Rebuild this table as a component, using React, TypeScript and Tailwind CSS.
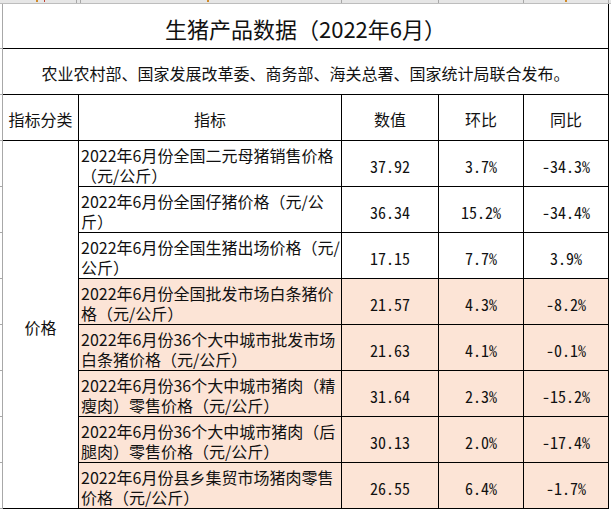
import React from "react";

const rows = [
  { l1: "2022年6月份全国二元母猪销售价格", l2: "（元/公斤）", v: "37.92", h: "3.7%", t: "-34.3%", pink: false },
  { l1: "2022年6月份全国仔猪价格（元/公", l2: "斤）", v: "36.34", h: "15.2%", t: "-34.4%", pink: false },
  { l1: "2022年6月份全国生猪出场价格（元/", l2: "公斤）", v: "17.15", h: "7.7%", t: "3.9%", pink: false },
  { l1: "2022年6月份全国批发市场白条猪价", l2: "格（元/公斤）", v: "21.57", h: "4.3%", t: "-8.2%", pink: true },
  { l1: "2022年6月份36个大中城市批发市场", l2: "白条猪价格（元/公斤）", v: "21.63", h: "4.1%", t: "-0.1%", pink: true },
  { l1: "2022年6月份36个大中城市猪肉（精", l2: "瘦肉）零售价格（元/公斤）", v: "31.64", h: "2.3%", t: "-15.2%", pink: true },
  { l1: "2022年6月份36个大中城市猪肉（后", l2: "腿肉）零售价格（元/公斤）", v: "30.13", h: "2.0%", t: "-17.4%", pink: true },
  { l1: "2022年6月份县乡集贸市场猪肉零售", l2: "价格（元/公斤）", v: "26.55", h: "6.4%", t: "-1.7%", pink: true },
];

const num = "font-['Noto_Sans_Mono_CJK_SC','Noto_Sans_CJK_SC',monospace]";

export default function App() {
  return (
    <div className="w-[611px] h-[512px] bg-white overflow-hidden text-[#111] font-['Noto_Sans_CJK_SC',sans-serif]">
      {/* top header strip */}
      <div className="relative flex h-[4px] bg-[#e6e6e6] border-b border-[#bdbdbd]">
        <div className="w-[77px] border-r border-[#a8a8a8]" />
        <div className="w-[4px] border-r border-[#a8a8a8]" />
        <div className="w-[261px] border-r border-[#a8a8a8]" />
        <div className="w-[97px] border-r border-[#a8a8a8]" />
        <div className="w-[85px] border-r border-[#a8a8a8]" />
        <div className="w-[85px] border-r border-[#a8a8a8]" />
        <div className="flex-1" />
        <span className="absolute left-[36px] top-0 w-[2px] h-[2px] bg-[#d08a2a]" />
        <span className="absolute left-[44px] top-0 w-[1px] h-[2px] bg-[#c04030]" />
        <span className="absolute left-[207px] top-0 w-[2px] h-[2px] bg-[#d08a2a]" />
        <span className="absolute left-[565px] top-0 w-[2px] h-[2px] bg-[#d08a2a]" />
      </div>
      <div className="flex">
        {/* row header gutter */}
        <div className="w-[3px] flex flex-col border-r border-[#a8a8a8]">
          <div className="h-[45px] border-b border-[#a8a8a8]" />
          {Array.from({ length: 10 }).map((_, i) => (
            <div key={i} className="h-[46px] border-b border-[#a8a8a8]" />
          ))}
        </div>
        {/* table */}
        <div className="w-[606px] flex flex-col border-r border-black">
          <div className="h-[45px] border-b border-black flex items-center justify-center pt-[4px] text-[22px]">
            生猪产品数据（2022年6月）
          </div>
          <div className="h-[46px] border-b border-black flex items-center justify-center pt-[2px] text-[16px]">
            农业农村部、国家发展改革委、商务部、海关总署、国家统计局联合发布。
          </div>
          <div className="grid grid-cols-[76px_263px_97px_85px_84px] grid-rows-[repeat(9,46px)] text-[16px]">
            <div className="border-r border-b border-black flex items-center justify-center pt-[3px]">指标分类</div>
            <div className="border-r border-b border-black flex items-center justify-center pt-[3px]">指标</div>
            <div className="border-r border-b border-black flex items-center justify-center pt-[3px]">数值</div>
            <div className="border-r border-b border-black flex items-center justify-center pt-[3px]">环比</div>
            <div className="border-b border-black flex items-center justify-center pt-[3px]">同比</div>
            <div className="col-start-1 row-start-2 row-span-8 border-r border-b border-black flex items-center justify-center pt-[4px]">
              价格
            </div>
            {rows.map((r, i) => {
              const bg = r.pink ? "bg-[#fce4d6]" : "bg-white";
              return (
                <React.Fragment key={i}>
                  <div className={`${bg} border-r border-b border-black flex flex-col justify-center pl-[2px] pt-[3px] leading-[20px] whitespace-nowrap`}>
                    <span>{r.l1}</span>
                    <span>{r.l2}</span>
                  </div>
                  <div className={`${bg} ${num} border-r border-b border-black flex items-center justify-center pt-[4px]`}>{r.v}</div>
                  <div className={`${bg} ${num} border-r border-b border-black flex items-center justify-center pt-[4px]`}>{r.h}</div>
                  <div className={`${bg} ${num} border-b border-black flex items-center justify-center pt-[4px]`}>{r.t}</div>
                </React.Fragment>
              );
            })}
          </div>
        </div>
      </div>
    </div>
  );
}
